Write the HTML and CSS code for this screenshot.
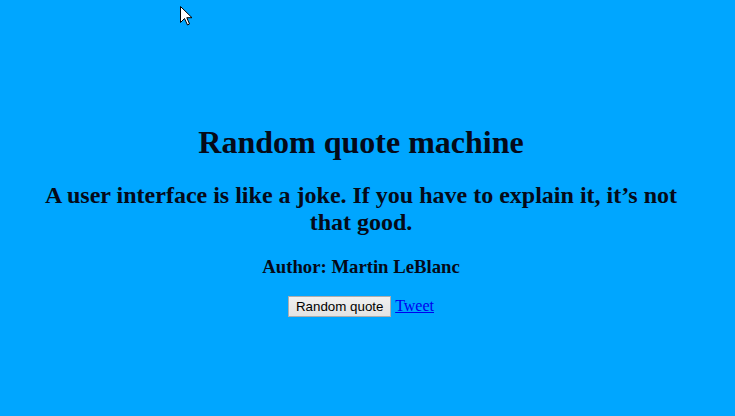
FILE: index.html
```html
<!DOCTYPE html>
<html>
<head>
<meta charset="utf-8">
<link rel="stylesheet" href="styles.css">
</head>
<body>
<div class="wrap">
  <h1 class="title">Random quote machine</h1>
  <h2 class="quote">A user interface is like a joke. If you have to explain it, it’s not that good.</h2>
  <h3 class="author">Author: Martin LeBlanc</h3>
  <div class="actions">
    <button class="btn">Random quote</button> <a class="tweet" href="#">Tweet</a>
  </div>
</div>
<svg class="cursor" width="13" height="20" viewBox="0 0 13 20">
  <path d="M0.5 0.5 L0.5 16.5 L4.5 12.5 L7.5 19 L9.5 18 L6.8 11.7 L12 11.7 Z" fill="#fff" stroke="#000" stroke-width="1"/>
</svg>
</body>
</html>
```
FILE: styles.css
```css
html, body {
  margin: 0;
  padding: 0;
}
body {
  background: #00a6ff;
  font-family: "Liberation Serif", "Times New Roman", serif;
  color: #050a18;
  height: 416px;
  overflow: hidden;
}
.wrap {
  margin-left: 36px;
  width: 650px;
  padding-top: 103px;
  text-align: center;
}
.title {
  font-size: 32px;
  margin: 21px 0;
}
.quote {
  font-size: 24px;
  margin: 19px 0 20px;
}
.author {
  font-size: 18.72px;
  margin: 19px 0 18px;
}
.actions {
  font-size: 16px;
}
.btn {
  font-family: Arial, "Liberation Sans", sans-serif;
  font-size: 13.33px;
  padding: 2px 7px;
  background: linear-gradient(#f0f0f0, #e3e3e3);
  border: 1px solid #adadad;
  border-radius: 0;
  color: #000;
}
.tweet {
  color: #0000ee;
}
.cursor {
  position: absolute;
  left: 180px;
  top: 6px;
}
```
